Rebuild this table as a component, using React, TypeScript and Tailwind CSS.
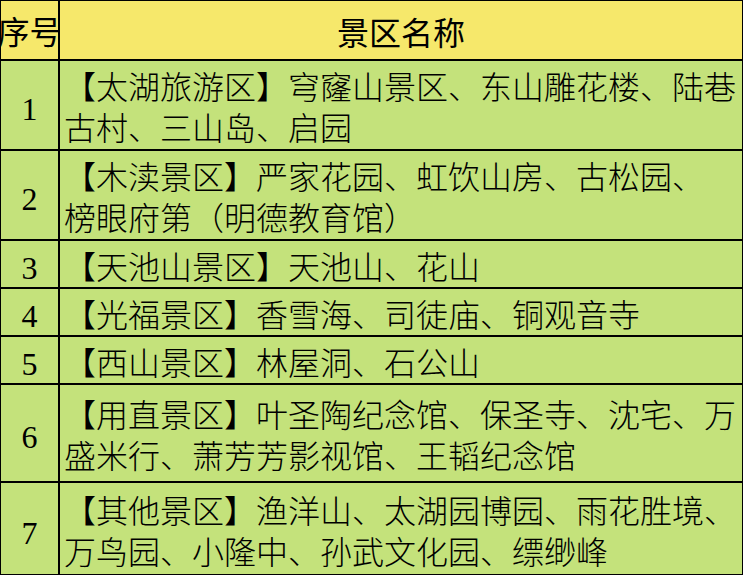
const rows = [
  { no: "1", h: "h-[88px]", lines: ["【太湖旅游区】穹窿山景区、东山雕花楼、陆巷", "古村、三山岛、启园"] },
  { no: "2", h: "h-[88px]", lines: ["【木渎景区】严家花园、虹饮山房、古松园、", "榜眼府第（明德教育馆）"] },
  { no: "3", h: "h-[46px]", lines: ["【天池山景区】天池山、花山"] },
  { no: "4", h: "h-[46px]", lines: ["【光福景区】香雪海、司徒庙、铜观音寺"] },
  { no: "5", h: "h-[46px]", lines: ["【西山景区】林屋洞、石公山"] },
  { no: "6", h: "h-[96px]", lines: ["【用直景区】叶圣陶纪念馆、保圣寺、沈宅、万", "盛米行、萧芳芳影视馆、王韬纪念馆"] },
  { no: "7", h: "h-[91px]", lines: ["【其他景区】渔洋山、太湖园博园、雨花胜境、", "万鸟园、小隆中、孙武文化园、缥缈峰"] },
];

const cjk = "font-['Noto_Sans_CJK_SC',sans-serif]";

export default function App() {
  return (
    <div className="w-[743px] h-[575px] bg-white overflow-hidden">
      <div className="grid grid-cols-[57px_682px] gap-[2px] bg-black p-[1px] w-[743px]">
        {/* header */}
        <div className={`h-[58px] bg-[#f6e86b] flex items-center justify-center overflow-hidden text-[32px] text-black whitespace-nowrap ${cjk}`}>
          序号
        </div>
        <div className={`h-[58px] bg-[#f6e86b] flex items-center justify-center pt-[2px] text-[32px] text-black ${cjk}`}>
          景区名称
        </div>

        {rows.map((r) => (
          <div key={r.no} className="contents">
            <div className={`${r.h} bg-[#c4e27b] flex items-center justify-center pt-[8px] text-[32px] leading-none text-black font-['Liberation_Serif',serif]`}>
              {r.no}
            </div>
            <div className={`${r.h} bg-[#c4e27b] flex flex-col justify-center pl-[4px] pt-[2px] text-[32px] leading-[41px] font-light text-black ${cjk}`}>
              {r.lines.map((l, i) => (
                <div key={i} className="whitespace-nowrap">{l}</div>
              ))}
            </div>
          </div>
        ))}
      </div>
    </div>
  );
}
